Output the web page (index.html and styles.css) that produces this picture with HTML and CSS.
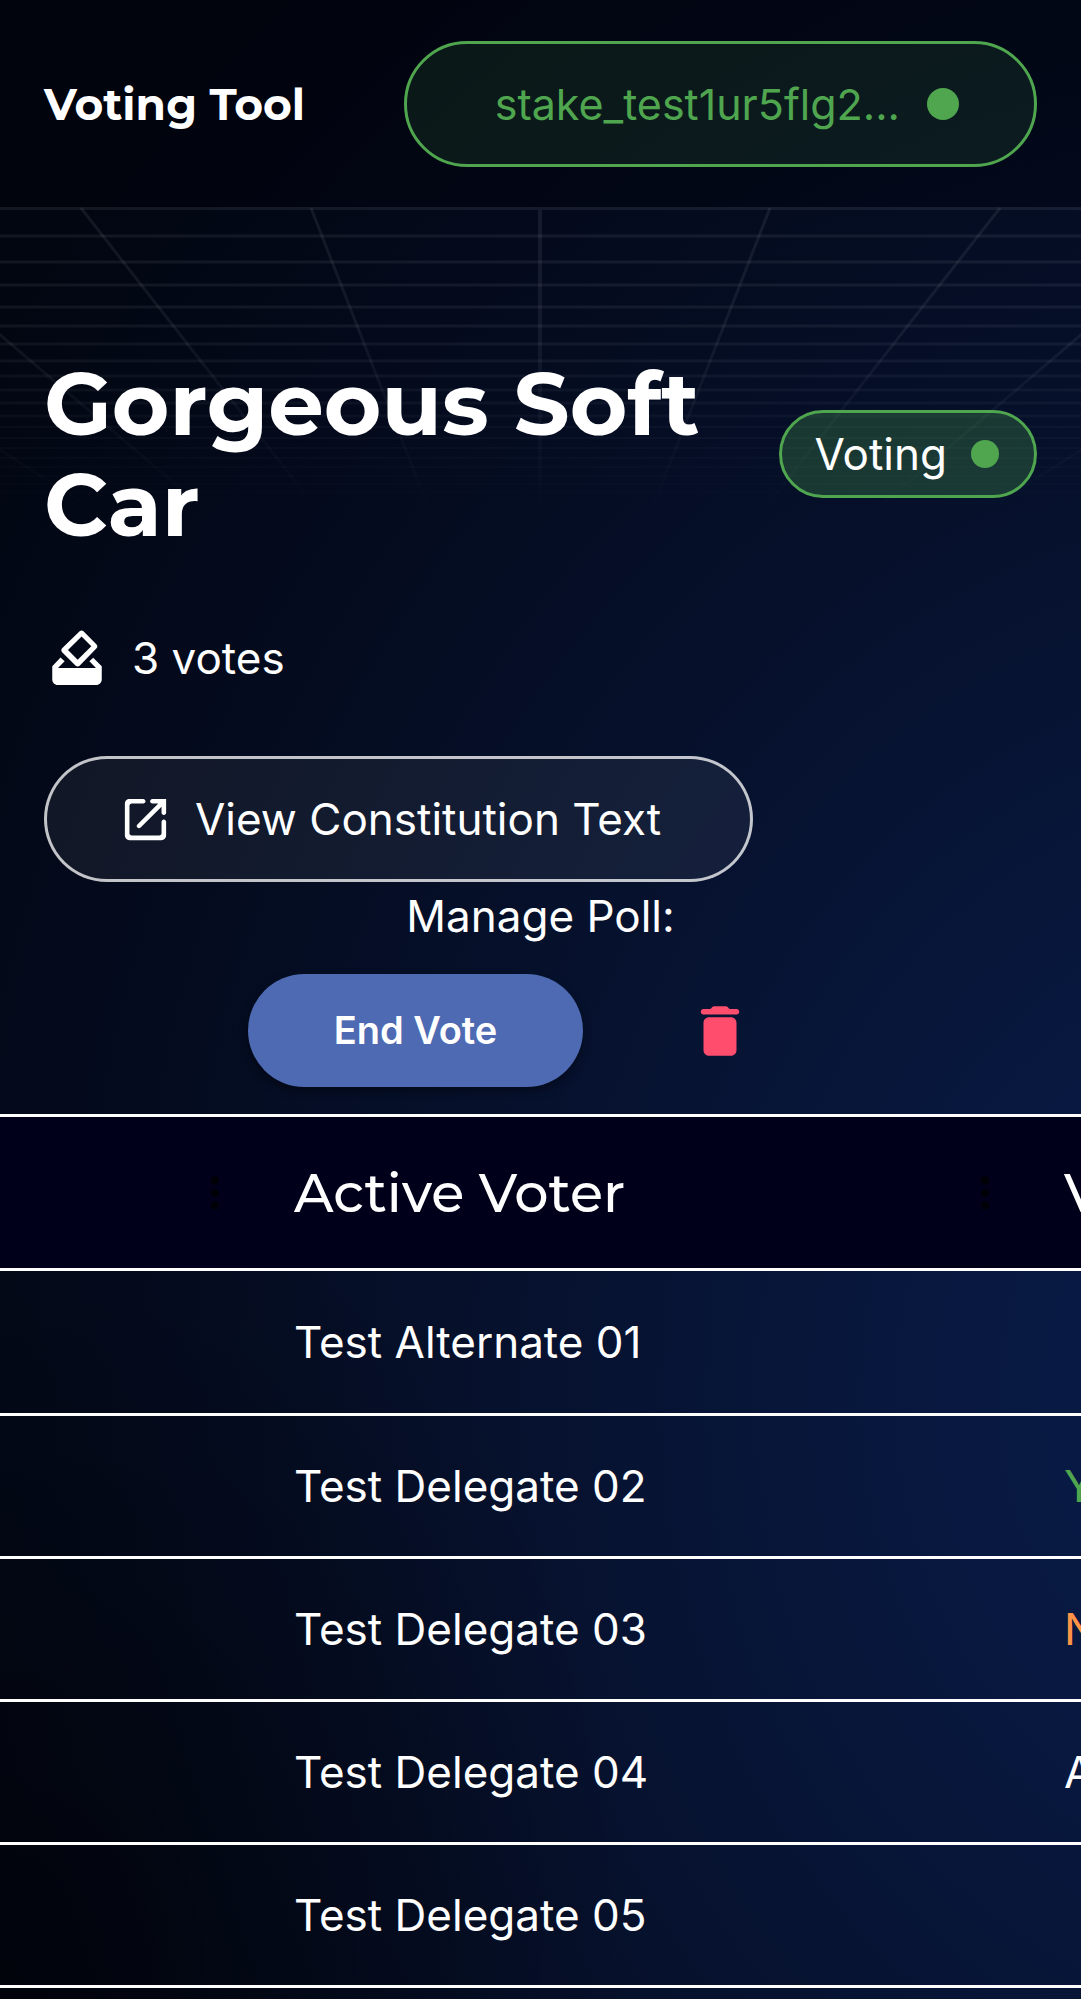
FILE: index.html
```html
<!DOCTYPE html>
<html lang="en">
<head>
<meta charset="utf-8">
<meta name="viewport" content="width=device-width, initial-scale=1">
<title>Voting Tool</title>
<link rel="stylesheet" href="styles.css">
</head>
<body>
<div class="page">
  <header class="topbar">
    <a class="brand" href="#">Voting Tool</a>
    <button class="wallet" type="button">stake_test1ur5flg2...<span class="dot"></span></button>
  </header>
  <main class="main">
    <svg class="grid-lines" viewBox="0 0 1081 310" aria-hidden="true">
      <defs>
        <linearGradient id="fade" x1="0" y1="0" x2="0" y2="1">
          <stop offset="0" stop-color="#fff"/>
          <stop offset="0.4" stop-color="#ddd"/>
          <stop offset="1" stop-color="#000"/>
        </linearGradient>
        <mask id="fade-mask" maskUnits="userSpaceOnUse" x="0" y="0" width="1081" height="310">
          <rect width="1081" height="310" fill="url(#fade)"/>
        </mask>
      </defs>
      <g mask="url(#fade-mask)" fill="none" stroke="#fff" stroke-opacity="0.07">
        <path stroke-width="4" d="M0 1H1081"/>
        <path stroke-width="3" d="M0 29H1081M0 55H1081M0 78H1081M0 100H1081M0 119H1081M0 137H1081M0 154H1081M0 169H1081M0 183H1081M0 196H1081M0 209H1081"/>
        <path stroke-width="2" d="M0 220H1081M0 231H1081M0 241H1081M0 251H1081M0 260H1081M0 269H1081M0 277H1081M0 285H1081M0 293H1081"/>
        <path stroke-width="4" d="M540 3V310"/>
        <path stroke-width="3" d="M311 1L432 310M81 1L323 310M-149 1L214 310M-379 1L105 310M770 1L649 310M1000 1L758 310M1230 1L867 310M1460 1L976 310"/>
      </g>
    </svg>
    <section class="poll">
      <div class="poll-head">
        <h1 class="poll-title">Gorgeous Soft Car</h1>
        <span class="status">Voting<span class="dot dot-small"></span></span>
      </div>
      <p class="votes">
        <svg class="icon" viewBox="0 0 24 24" aria-hidden="true"><path d="M6 11.800L3 15v4.800c0 1.100.89 2 1.990 2H19c1.100 0 2-.89 2-2V15l-3.100-3.100-1.400 1.300 2.400 2.400H5.100l2.400-2.400zM17.200 7.700l-4.950 4.950-3.540-3.540 4.950-4.950L17.200 7.700zm-4.240-5.410L6.590 8.460c-.39.39-.39 1.020 0 1.410l4.950 4.950c.39.39 1.020.39 1.410 0l6.160-6.360c.39-.39.39-1.020 0-1.410L14.360 2.300c-.38-.4-1.010-.4-1.400-.01z"/></svg>
        3 votes
      </p>
      <a class="view-text" href="#">
        <svg class="icon icon-small" viewBox="0 0 24 24" aria-hidden="true"><path d="M18 19H6c-.55 0-1-.45-1-1V6c0-.55.45-1 1-1h5c.55 0 1-.45 1-1s-.45-1-1-1H5c-1.110 0-2 .9-2 2v14c0 1.100.9 2 2 2h14c1.100 0 2-.9 2-2v-6c0-.55-.45-1-1-1s-1 .45-1 1v5c0 .55-.45 1-1 1zM14 4c0 .55.45 1 1 1h2.590l-9.130 9.130c-.39.39-.39 1.020 0 1.410.39.39 1.020.39 1.410 0L19 6.410V9c0 .55.45 1 1 1s1-.45 1-1V3h-6c-.55 0-1 .45-1 1z"/></svg>
        View Constitution Text
      </a>
    </section>
    <section class="manage">
      <h2 class="manage-title">Manage Poll:</h2>
      <div class="manage-actions">
        <button class="end-vote" type="button">End Vote</button>
        <button class="delete" type="button" aria-label="Delete poll">
          <svg class="icon" viewBox="0 0 24 24" aria-hidden="true"><path d="M6 19c0 1.100.9 2 2 2h8c1.100 0 2-.9 2-2V9c0-1.100-.9-2-2-2H8c-1.100 0-2 .9-2 2v10zM18 4h-2.500l-.71-.71c-.18-.18-.44-.29-.7-.29H9.910c-.26 0-.52.110-.7.290L8.500 4H6c-.55 0-1 .45-1 1s.45 1 1 1h12c.55 0 1-.45 1-1s-.45-1-1-1z"/></svg>
        </button>
      </div>
    </section>
    <div class="table-wrap">
      <table class="voters">
        <colgroup><col class="col-menu"><col class="col-voter"><col class="col-vote"></colgroup>
        <thead>
          <tr>
            <th><div class="head-cell"><span></span><svg class="kebab" viewBox="0 0 24 24" aria-hidden="true"><path d="M12 8c1.100 0 2-.9 2-2s-.9-2-2-2-2 .9-2 2 .9 2 2 2zm0 2c-1.100 0-2 .9-2 2s.9 2 2 2 2-.9 2-2-.9-2-2-2zm0 6c-1.100 0-2 .9-2 2s.9 2 2 2 2-.9 2-2-.9-2-2-2z"/></svg></div></th>
            <th><div class="head-cell"><span>Active Voter</span><svg class="kebab" viewBox="0 0 24 24" aria-hidden="true"><path d="M12 8c1.100 0 2-.9 2-2s-.9-2-2-2-2 .9-2 2 .9 2 2 2zm0 2c-1.100 0-2 .9-2 2s.9 2 2 2 2-.9 2-2-.9-2-2-2zm0 6c-1.100 0-2 .9-2 2s.9 2 2 2 2-.9 2-2-.9-2-2-2z"/></svg></div></th>
            <th><div class="head-cell"><span>Vote</span></div></th>
          </tr>
        </thead>
        <tbody>
          <tr><td></td><td>Test Alternate 01</td><td></td></tr>
          <tr><td></td><td>Test Delegate 02</td><td class="yes">Yes</td></tr>
          <tr><td></td><td>Test Delegate 03</td><td class="no">No</td></tr>
          <tr><td></td><td>Test Delegate 04</td><td>Abstain</td></tr>
          <tr><td></td><td>Test Delegate 05</td><td></td></tr>
        </tbody>
      </table>
    </div>
  </main>
</div>
</body>
</html>
```
FILE: styles.css
```css
* {
  box-sizing: border-box;
}

body {
  margin: 0;
  background-color: #01030a;
  color: #fff;
  font: 400 44px/66px Inter, "Liberation Sans", sans-serif;
}

.page {
  min-height: 100vh;
  overflow: hidden;
  background:
    radial-gradient(ellipse 60% 45% at 0% 100%, rgba(0, 0, 2, 0.6) 0%, rgba(0, 0, 2, 0) 100%),
    radial-gradient(ellipse 145% 92% at 118% 70%, #081b4a 0%, #08183f 22%, #06112d 50%, #040b1e 75%, #020611 100%);
}

button {
  font: inherit;
  color: inherit;
  cursor: pointer;
}

a {
  color: inherit;
  text-decoration: none;
}

.topbar {
  display: flex;
  align-items: center;
  justify-content: space-between;
  padding: 41px 44px 40px;
  background: rgba(0, 0, 5, 0.3);
}

.brand {
  font: 700 44px/66px Montserrat, Inter, sans-serif;
}

.wallet {
  display: flex;
  align-items: center;
  gap: 27px;
  padding: 27px 75px 27px 88px;
  border: 3px solid #4fa64f;
  border-radius: 63px;
  background: rgba(79, 166, 79, 0.12);
  color: #4fa64f;
  font-size: 43px;
}

.dot {
  width: 32px;
  height: 32px;
  border-radius: 50%;
  background: #4fa64f;
}

.dot-small {
  width: 28px;
  height: 28px;
}

.main {
  position: relative;
}

.grid-lines {
  position: absolute;
  top: 0;
  left: 0;
  width: 100%;
}

.poll {
  position: relative;
  padding: 146px 44px 0;
}

.poll-head {
  display: flex;
  align-items: center;
  justify-content: space-between;
  gap: 44px;
}

.poll-title {
  margin: 0;
  font: 700 88px/101px Montserrat, Inter, sans-serif;
}

.status {
  display: flex;
  align-items: center;
  gap: 24px;
  flex-shrink: 0;
  padding: 8px 35px 8px 32px;
  border: 3px solid #4fa64f;
  border-radius: 44px;
  background: rgba(79, 166, 79, 0.28);
}

.votes {
  display: flex;
  align-items: center;
  gap: 22px;
  margin: 70px 0 65px;
}

.icon {
  display: block;
  width: 66px;
  height: 66px;
  fill: currentColor;
}

.icon-small {
  width: 55px;
  height: 55px;
}

.view-text {
  display: inline-flex;
  align-items: center;
  gap: 22px;
  padding: 27px 89px 27px 71px;
  border: 3px solid rgba(255, 255, 255, 0.75);
  border-radius: 63px;
  background: rgba(255, 255, 255, 0.06);
  vertical-align: top;
}

.manage {
  position: relative;
  display: flex;
  flex-direction: column;
  align-items: center;
  padding: 1px 0 27px;
}

.manage-title {
  margin: 0 0 25px;
  font: inherit;
}

.manage-actions {
  display: flex;
  align-items: center;
  gap: 24px;
}

.end-vote {
  padding: 24px 86px;
  border: 0;
  border-radius: 57px;
  background: #4d6ab2;
  box-shadow: 0 4px 10px rgba(0, 0, 0, 0.4);
  font-weight: 600;
  font-size: 38px;
  line-height: 65px;
}

.delete {
  padding: 22px 80px;
  border: 0;
  background: none;
  color: #ff4d6d;
}

.table-wrap {
  overflow-x: auto;
  scrollbar-width: none;
}

.voters {
  width: 1500px;
  border-collapse: separate;
  border-spacing: 0;
  table-layout: fixed;
  border-top: 3px solid #fff;
}

.col-menu {
  width: 267px;
}

.col-voter {
  width: 770px;
}

.voters th,
.voters td {
  height: 143px;
  padding: 0 27px;
  border-bottom: 3px solid #fff;
  text-align: left;
  font-weight: 400;
}

.voters tbody tr:first-child td {
  height: 145px;
}

.voters th {
  height: 154px;
  background: #00001a;
  font: 500 54px/66px Montserrat, Inter, sans-serif;
}

.head-cell {
  display: flex;
  align-items: center;
  justify-content: space-between;
}

.kebab {
  width: 50px;
  height: 50px;
  fill: #000;
  opacity: 0.7;
}

.voters .yes {
  color: #4fa64f;
}

.voters .no {
  color: #ff9447;
}
```
